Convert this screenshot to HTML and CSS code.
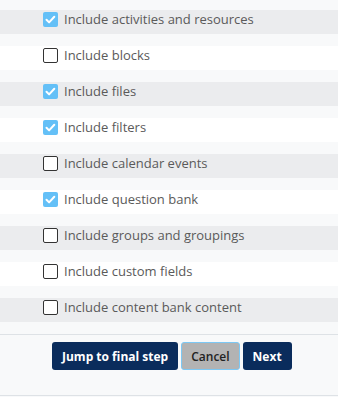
FILE: index.html
```html
<!doctype html>
<html lang="en">

<head>
    <meta charset="UTF-8" />
    <meta name="viewport" content="width=device-width, initial-scale=1.0" />
    <title>Backup settings</title>
    <link rel="stylesheet" href="styles.css">
</head>

<body>
    <form class="settings">
        <ul class="options">
            <li class="option"><label><input type="checkbox" checked /><span>Include activities and resources</span></label></li>
            <li class="option"><label><input type="checkbox" /><span>Include blocks</span></label></li>
            <li class="option"><label><input type="checkbox" checked /><span>Include files</span></label></li>
            <li class="option"><label><input type="checkbox" checked /><span>Include filters</span></label></li>
            <li class="option"><label><input type="checkbox" /><span>Include calendar events</span></label></li>
            <li class="option"><label><input type="checkbox" checked /><span>Include question bank</span></label></li>
            <li class="option"><label><input type="checkbox" /><span>Include groups and groupings</span></label></li>
            <li class="option"><label><input type="checkbox" /><span>Include custom fields</span></label></li>
            <li class="option"><label><input type="checkbox" /><span>Include content bank content</span></label></li>
        </ul>
        <div class="actions">
            <button type="button" class="btn btn-primary">Jump to final step</button>
            <button type="button" class="btn btn-secondary">Cancel</button>
            <button type="button" class="btn btn-primary">Next</button>
        </div>
    </form>
</body>

</html>
```

FILE: styles.css
```css
*,
*::before,
*::after {
    box-sizing: border-box;
}

body {
    margin: 0;
    font-family: 'Open Sans', 'Liberation Sans', sans-serif;
    background: #f8f9fa;
    height: 397px;
}

.options {
    list-style-type: none;
    margin: 0;
    padding: 10px 0 0 0;
    display: flex;
    flex-direction: column;
    gap: 12px;
}

.option {
    height: 24px;
    background: #ebecee;
}

.option:nth-child(even) {
    background: #fff;
}

.option>label {
    display: flex;
    align-items: flex-start;
    height: 100%;
    padding: 2px 0 0 43px;
    font-size: 13px;
    font-stretch: 89%;
    line-height: 15px;
    color: #5a5a5a;
}

.option input {
    appearance: none;
    flex: none;
    margin: 0 6px 0 0;
    width: 15px;
    height: 15px;
    border: 1.5px solid #333;
    border-radius: 2px;
    background: #fff;
}

.option input:checked {
    border: 0;
    background: #64c0f7 url("data:image/svg+xml,%3Csvg xmlns='http://www.w3.org/2000/svg' viewBox='0 0 15 15'%3E%3Cpath d='M3.5 7.8l2.6 2.6 5.2-5.6' fill='none' stroke='%23fff' stroke-width='2' stroke-linecap='round' stroke-linejoin='round'/%3E%3C/svg%3E") center / 15px 15px no-repeat;
}

.actions {
    margin-top: 12px;
    border-top: 1px solid #dee2e6;
    border-bottom: 1px solid #dee2e6;
    padding: 7px 0 25px 52px;
    display: flex;
    gap: 3px;
}

.btn {
    height: 28px;
    padding: 0 10px;
    border-radius: 3px;
    font-family: 'Open Sans', sans-serif;
    font-size: 12px;
    font-weight: bold;
    border: 0;
}

.btn-primary {
    background: #0a2c5c;
    color: #fff;
}

.btn-secondary {
    padding: 0 9px;
    background: #b3b3b3;
    color: #222;
    font-weight: 600;
    border: 1px solid #7cc8f4;
}
```
